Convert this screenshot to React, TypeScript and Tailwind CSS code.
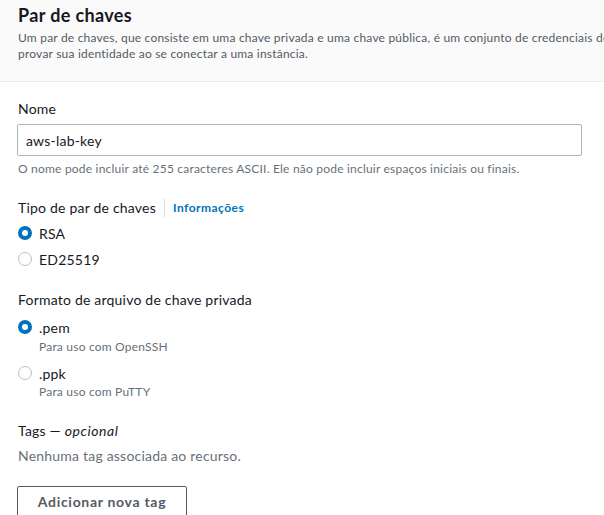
import { useState } from "react";

function Radio({ checked, onClick }: { checked: boolean; onClick: () => void }) {
  return (
    <button
      type="button"
      onClick={onClick}
      className={
        checked
          ? "h-[14px] w-[14px] shrink-0 rounded-full border-[4px] border-[#0073bb] bg-white"
          : "h-[14px] w-[14px] shrink-0 rounded-full border-[1.5px] border-[#b6c1c2] bg-white"
      }
    />
  );
}

export default function App() {
  const [name, setName] = useState("aws-lab-key");
  const [keyType, setKeyType] = useState("rsa");
  const [format, setFormat] = useState("pem");

  return (
    <div className="min-h-screen w-full overflow-hidden bg-white font-['Lato',sans-serif] tracking-[0.013em] text-[#16191f]">
      <div className="border-b border-[#eaeded] bg-[#fafafa] px-[18px] pb-[19px] pt-[3px]">
        <h1 className="text-[18px] font-bold leading-[24px] tracking-[0.02em]">Par de chaves</h1>
        <p className="mt-[3px] whitespace-nowrap text-[12px] leading-[16px] text-[#545b64]">
          Um par de chaves, que consiste em uma chave privada e uma chave pública, é um conjunto de credenciais de
          <br />
          provar sua identidade ao se conectar a uma instância.
        </p>
      </div>

      <div className="px-[18px] pt-[17px]">
        <label className="block text-[14px] leading-[20px]">Nome</label>
        <input
          value={name}
          onChange={(e) => setName(e.target.value)}
          className="mt-[5px] ml-[-1px] h-[32px] w-[565px] rounded-[2px] border border-[#aab7b8] bg-white px-[8px] text-[14px] text-[#16191f] outline-none"
        />
        <p className="mt-[5px] text-[12px] leading-[16px] text-[#687078]">
          O nome pode incluir até 255 caracteres ASCII. Ele não pode incluir espaços iniciais ou finais.
        </p>

        <div className="mt-[21px] flex items-center text-[14px] leading-[20px]">
          <span>Tipo de par de chaves</span>
          <span className="mx-[8px] h-[18px] w-px bg-[#d5dbdb]" />
          <a className="text-[12px] font-bold tracking-[0.04em] text-[#0073bb]">Informações</a>
        </div>
        <div className="mt-[2px]">
          <div className="flex h-[26px] items-center gap-[7px] text-[14px]">
            <Radio checked={keyType === "rsa"} onClick={() => setKeyType("rsa")} />
            <span>RSA</span>
          </div>
          <div className="flex h-[26px] items-center gap-[7px] text-[14px]">
            <Radio checked={keyType === "ed"} onClick={() => setKeyType("ed")} />
            <span>ED25519</span>
          </div>
        </div>

        <div className="mt-[18px] text-[14px] leading-[20px]">Formato de arquivo de chave privada</div>
        <div className="mt-[7px]">
          <div className="flex h-[20px] items-center gap-[7px] text-[14px]">
            <Radio checked={format === "pem"} onClick={() => setFormat("pem")} />
            <span>.pem</span>
          </div>
          <p className="mt-[2px] pl-[21px] text-[12px] leading-[16px] text-[#687078]">Para uso com OpenSSH</p>
          <div className="mt-[8px] flex h-[20px] items-center gap-[7px] text-[14px]">
            <Radio checked={format === "ppk"} onClick={() => setFormat("ppk")} />
            <span>.ppk</span>
          </div>
          <p className="mt-[1px] pl-[21px] text-[12px] leading-[16px] text-[#687078]">Para uso com PuTTY</p>
        </div>

        <div className="mt-[21px] text-[14px] leading-[20px]">
          Tags — <i className="tracking-[0.04em]">opcional</i>
        </div>
        <p className="mt-[5px] text-[14px] leading-[20px] text-[#687078]">Nenhuma tag associada ao recurso.</p>

        <button
          type="button"
          className="mt-[20px] ml-[-1px] h-[32px] w-[170px] rounded-[2px] border border-[#545b64] bg-white pb-[1px] text-[14px] font-bold tracking-[0.05em] text-[#545b64]"
        >
          Adicionar nova tag
        </button>
      </div>
    </div>
  );
}
